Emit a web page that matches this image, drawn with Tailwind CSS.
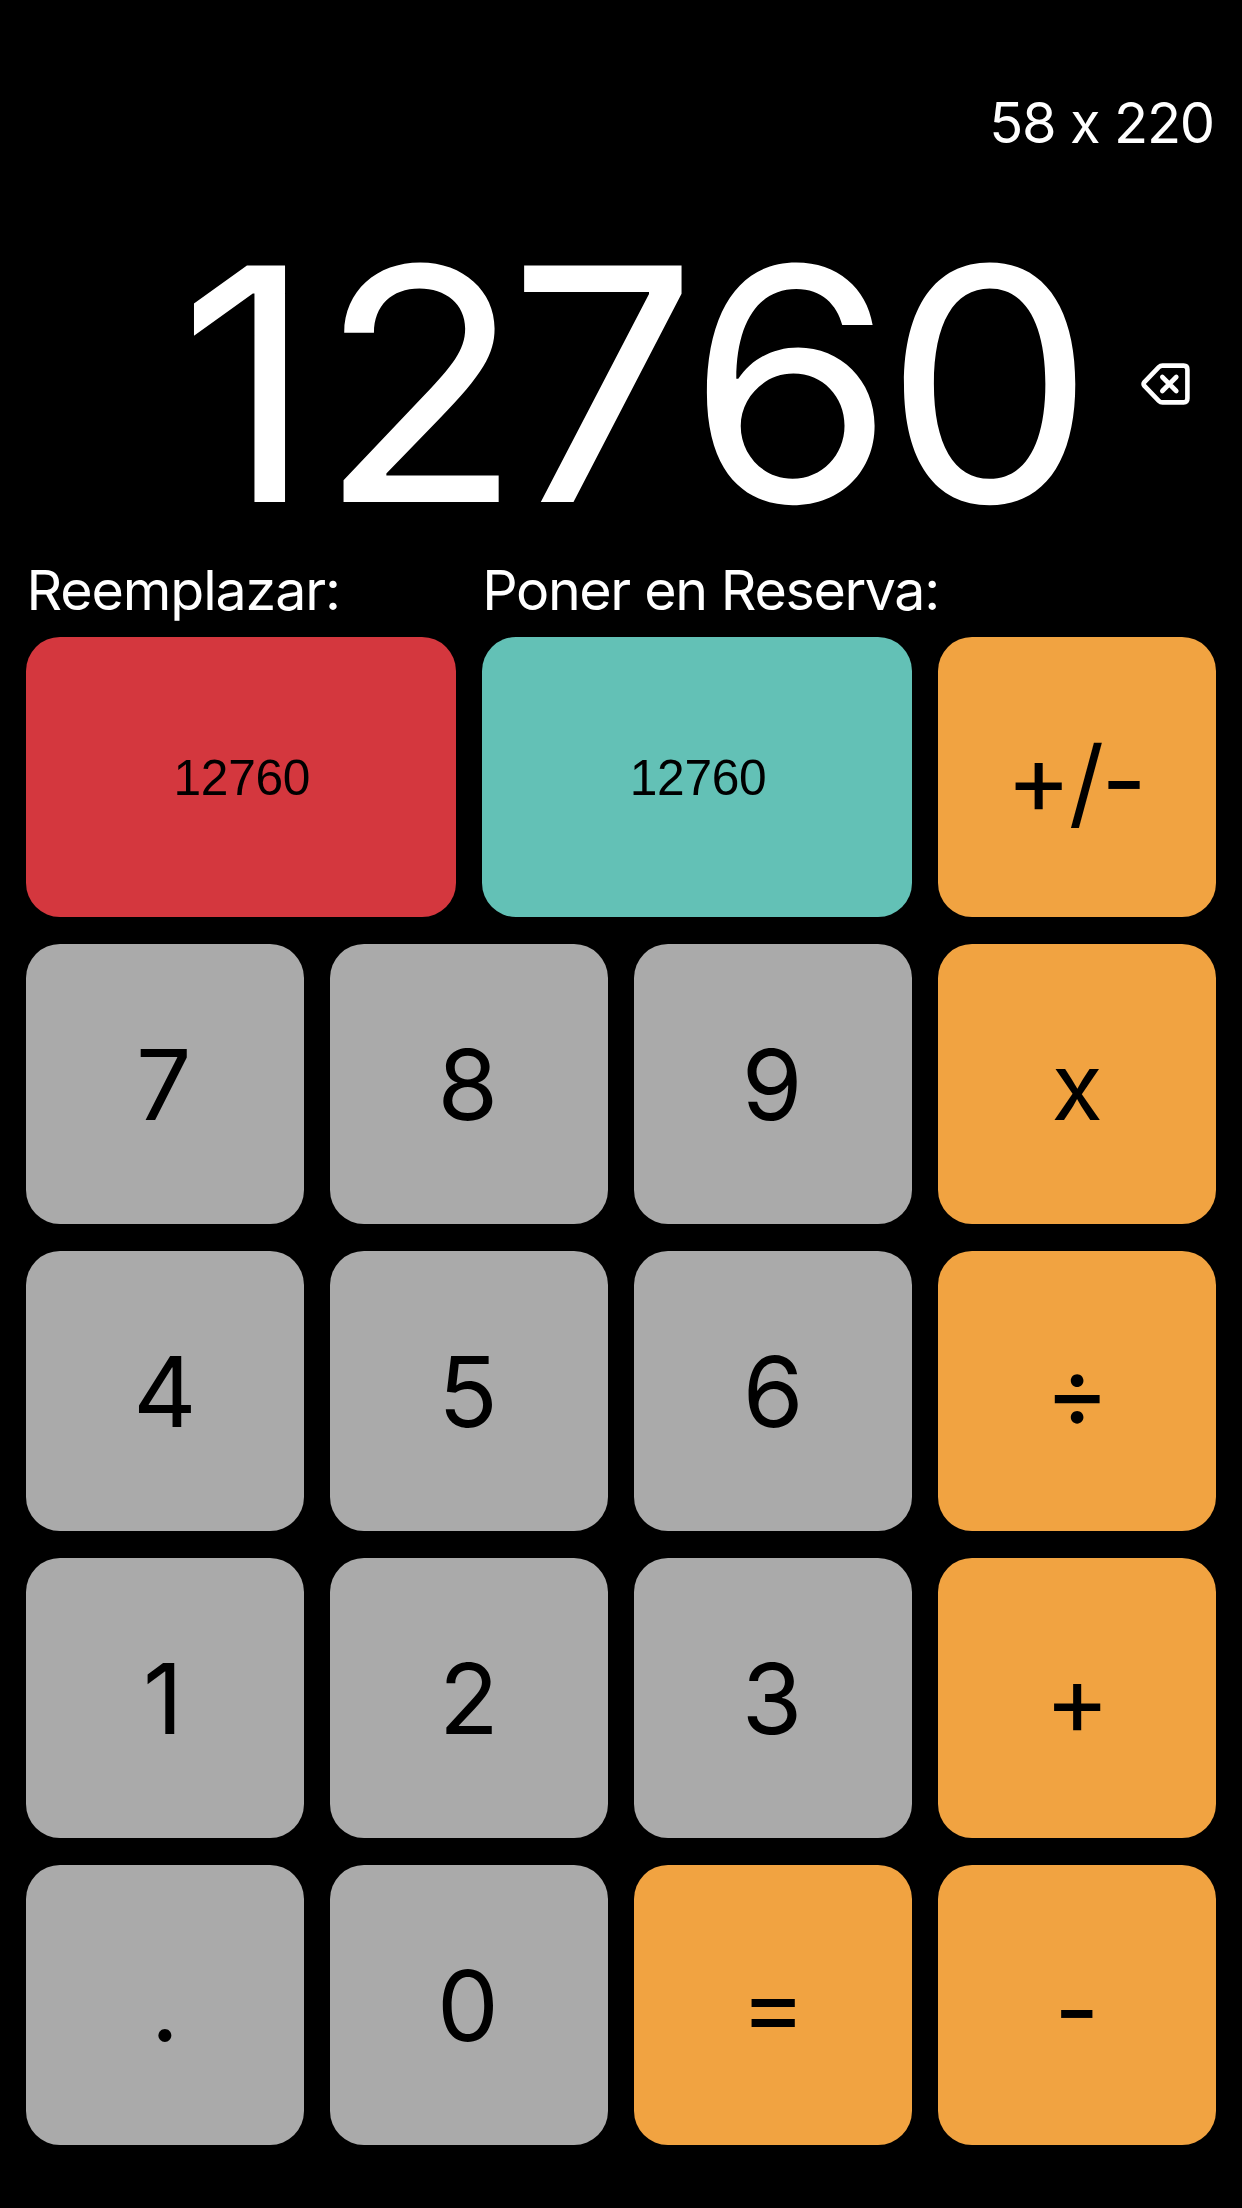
<!DOCTYPE html>
<html lang="es">
<head>
<meta charset="utf-8">
<title>Calculadora</title>
<script src="https://cdn.jsdelivr.net/npm/@tailwindcss/browser@4"></script>
</head>
<body class="bg-black">
<main class="flex h-[2208px] w-[1242px] flex-col overflow-hidden bg-black font-['Inter',sans-serif] text-white [font-feature-settings:'calt'_0]">
  <div class="mt-[90px] flex h-[66px] items-center justify-end pr-[28px] text-[56px] leading-[66px] tracking-[-1.2px] whitespace-pre">58 x 220</div>

  <div class="mt-[66px] flex h-[324px] items-center justify-end gap-[46px] pr-[52px]">
    <div class="origin-right scale-x-103 text-[325px] leading-[324px]"><span class="tracking-[3.8px]">1</span><span class="tracking-[-14px]">2</span><span class="tracking-[-10.3px]">7</span><span class="tracking-[-10.2px]">6</span><span>0</span></div>
    <button class="block h-[42px] w-[49px]" aria-label="Borrar">
      <svg class="block" width="49" height="42" viewBox="0 0 49 42" fill="none" stroke="#fff" stroke-linecap="round" stroke-linejoin="round">
        <path stroke-width="4.6" d="M21.5 2.6H42.6Q46.4 2.6 46.4 6.4V35.6Q46.4 39.4 42.6 39.4H21.5Q19.4 39.4 17.8 37.8L3.4 22.9Q1.8 21 3.4 19.1L17.8 4.2Q19.4 2.6 21.5 2.6Z"/>
        <path stroke-width="4.6" d="M21.3 14L35.3 28M35.3 14L21.3 28"/>
      </svg>
    </button>
  </div>

  <div class="mt-[11px] mb-[14px] flex h-[66px] gap-[26.5px] px-[26.5px] text-[55.5px] leading-[66px]">
    <div class="w-[429.2px] tracking-[-1.1px]">Reemplazar:</div>
    <div class="tracking-[-1.35px] whitespace-nowrap">Poner en Reserva:</div>
  </div>

  <div class="flex flex-col gap-[26.6px] px-[26px] text-[98px] leading-none text-black">
    <div class="flex h-[280.4px] gap-[26.5px]">
      <button class="flex flex-1 items-center justify-center rounded-[34px] bg-[#d4373e] pt-[3px] pl-0.5 font-['Liberation_Sans',sans-serif] text-[49.7px] tracking-[-0.3px]">12760</button>
      <button class="flex flex-1 items-center justify-center rounded-[34px] bg-[#63c1b6] pt-[3px] pl-0.5 font-['Liberation_Sans',sans-serif] text-[49.7px] tracking-[-0.3px]">12760</button>
      <button class="flex w-[277.6px] items-center justify-center rounded-[34px] bg-[#f1a341] pt-[3px] pr-1 tracking-[-2.5px]"><span>+</span><span class="translate-y-[3px]">/</span><span class="translate-y-px">-</span></button>
    </div>
    <div class="grid auto-rows-[280.4px] grid-cols-4 gap-x-[26.5px] gap-y-[26.6px]">
      <button class="flex items-center justify-center rounded-[34px] bg-[#aaaaaa] pt-0.5 pr-0.5">7</button>
      <button class="flex items-center justify-center rounded-[34px] bg-[#aaaaaa] pt-0.5 pr-0.5">8</button>
      <button class="flex items-center justify-center rounded-[34px] bg-[#aaaaaa] pt-0.5 pr-0.5">9</button>
      <button class="flex items-center justify-center rounded-[34px] bg-[#f1a341] pt-1 text-[94px]">x</button>
      <button class="flex items-center justify-center rounded-[34px] bg-[#aaaaaa] pt-0.5">4</button>
      <button class="flex items-center justify-center rounded-[34px] bg-[#aaaaaa] pt-0.5 pr-0.5">5</button>
      <button class="flex items-center justify-center rounded-[34px] bg-[#aaaaaa] pt-0.5">6</button>
      <button class="flex items-center justify-center rounded-[34px] bg-[#f1a341] pt-0.5">÷</button>
      <button class="flex items-center justify-center rounded-[34px] bg-[#aaaaaa] pt-0.5 pr-1">1</button>
      <button class="flex items-center justify-center rounded-[34px] bg-[#aaaaaa] pt-0.5">2</button>
      <button class="flex items-center justify-center rounded-[34px] bg-[#aaaaaa] pt-0.5 pr-0.5">3</button>
      <button class="flex items-center justify-center rounded-[34px] bg-[#f1a341] pt-[3px]">+</button>
      <button class="flex items-center justify-center rounded-[34px] bg-[#aaaaaa] pt-0.5">.</button>
      <button class="flex items-center justify-center rounded-[34px] bg-[#aaaaaa] pt-0.5 pr-0.5">0</button>
      <button class="flex items-center justify-center rounded-[34px] bg-[#f1a341] pt-0.5">=</button>
      <button class="flex items-center justify-center rounded-[34px] bg-[#f1a341] pt-[8px] pr-px">-</button>
    </div>
  </div>
</main>
</body>
</html>
